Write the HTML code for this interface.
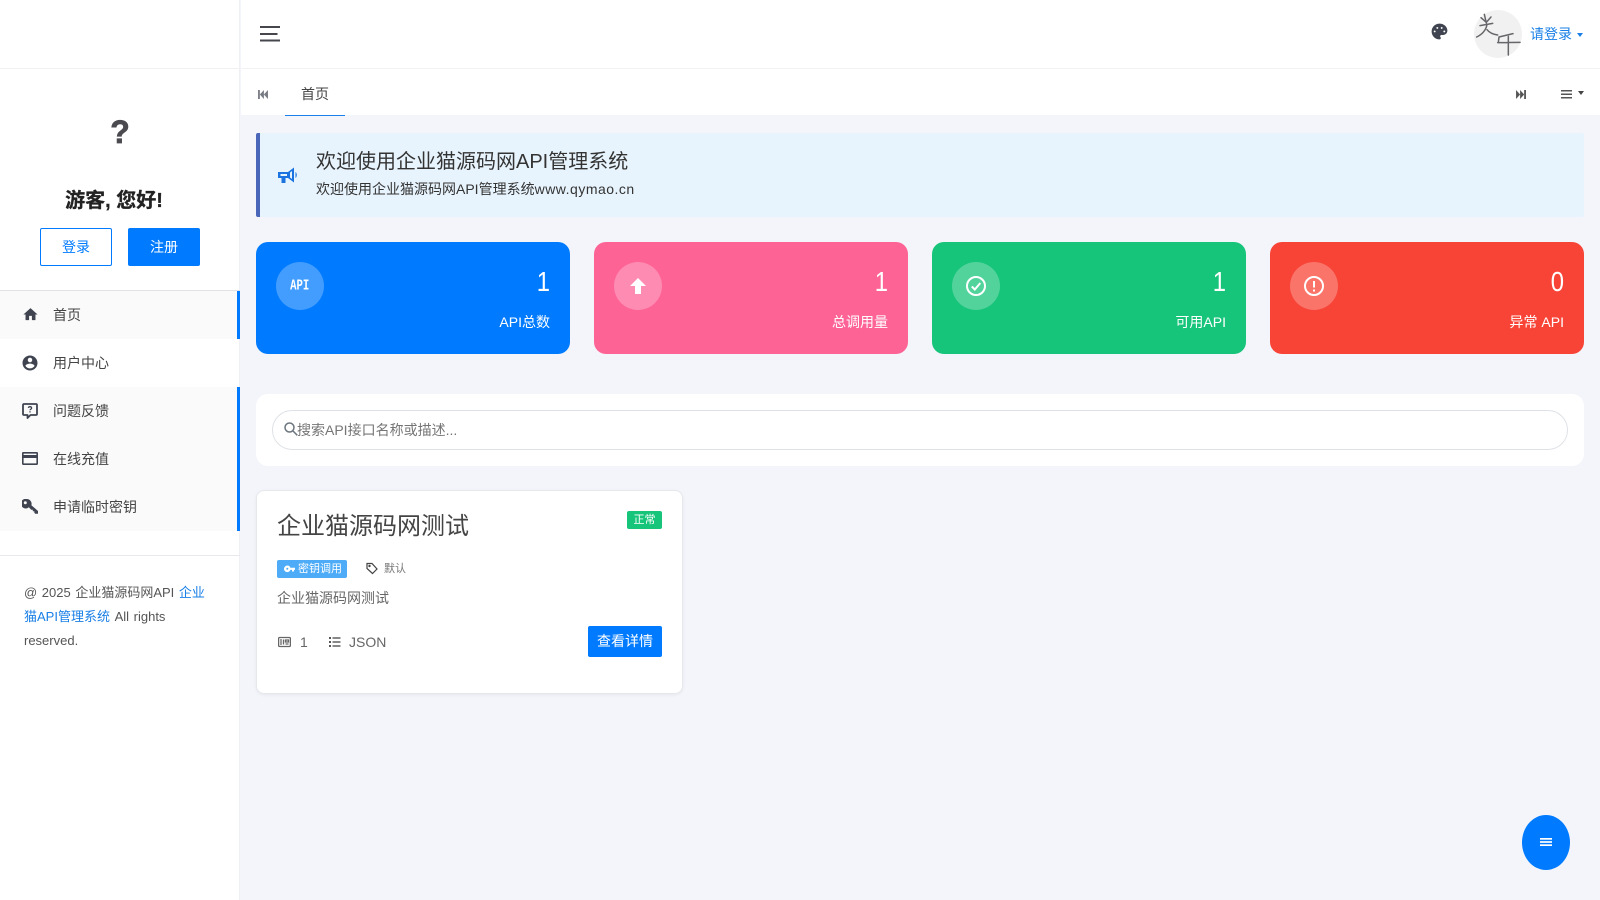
<!DOCTYPE html>
<html lang="zh-CN"><head><meta charset="utf-8"><title>企业猫源码网API</title>
<style>
*{box-sizing:border-box}
html,body{margin:0;padding:0;width:1600px;height:900px;overflow:hidden;background:#f3f5fa;font-family:"Liberation Sans","Noto Sans CJK SC",sans-serif;color:#444;font-size:14px}
.a{position:absolute}
.t{position:absolute;white-space:nowrap;height:20px;line-height:20px}
.r{text-align:right}
.n{height:32px;line-height:32px;font-size:28px;color:#fff;width:100px;top:266px;transform:scaleX(.85);transform-origin:right center}
svg{position:absolute;display:block}
a{color:#1a7fe6;text-decoration:none}
</style></head><body>
<!-- sidebar -->
<div class="a" style="left:0;top:0;width:240px;height:900px;background:#fff;border-right:1px solid #eef0f3"></div>
<div class="a" style="left:0;top:68px;width:240px;height:1px;background:#f0f1f3"></div>
<div class="t" style="left:100px;top:112px;width:40px;height:40px;line-height:40px;text-align:center;font-size:32px;font-weight:700;color:#4a4a4f;-webkit-text-stroke:.7px #4a4a4f">?</div>
<div class="t" style="left:0;top:187px;width:228px;height:28px;line-height:28px;text-align:center;font-size:20px;font-weight:700;color:#222;-webkit-text-stroke:.3px #222">游客, 您好!</div>
<div class="a" style="left:40px;top:228px;width:72px;height:38px;border:1px solid #007bff;border-radius:2px;color:#007bff;text-align:center;line-height:36px">登录</div>
<div class="a" style="left:128px;top:228px;width:72px;height:38px;background:#007bff;border-radius:2px;color:#fff;text-align:center;line-height:38px">注册</div>
<div class="a" style="left:0;top:290px;width:240px;height:1px;background:#dfe1e4"></div>
<div class="a" style="left:0;top:291px;width:240px;height:48px;background:#fafafb;border-right:3px solid #007bff"></div>
<div class="a" style="left:0;top:387px;width:240px;height:144px;background:#fafafb;border-right:3px solid #007bff"></div>
<svg style="left:22px;top:306px" width="17" height="17" viewBox="0 0 24 24" fill="#3f4450"><path d="M10 20v-6h4v6h5v-8h3L12 3 2 12h3v8z"/></svg>
<svg style="left:21px;top:354px" width="18" height="18" viewBox="0 0 24 24" fill="#3f4450"><path d="M12 2C6.48 2 2 6.48 2 12s4.48 10 10 10 10-4.48 10-10S17.52 2 12 2zm0 3c1.66 0 3 1.34 3 3s-1.34 3-3 3-3-1.34-3-3 1.34-3 3-3zm0 14.2c-2.5 0-4.71-1.28-6-3.22.03-1.99 4-3.08 6-3.08 1.99 0 5.97 1.09 6 3.08-1.29 1.94-3.5 3.22-6 3.22z"/></svg>
<svg style="left:22px;top:403px" width="16" height="16" viewBox="0 0 16 16" fill="none" stroke="#3f4450" stroke-width="1.800"><path d="M2 1h12a1 1 0 0 1 1 1v9a1 1 0 0 1-1 1H8.500L5.500 15v-3H2a1 1 0 0 1-1-1V2a1 1 0 0 1 1-1z" stroke-linejoin="round"/><path d="M6.400 4.900c.2-1.700 3.200-1.600 3.200.2 0 1.100-1.600 1.200-1.600 2.200" stroke-width="1.300"/><path d="M8 8.200v1.300" stroke-width="1.300"/></svg>
<svg style="left:22px;top:452px" width="16" height="13" viewBox="0 0 16 13"><path fill="#3f4450" d="M1.200 0h13.600A1.200 1.200 0 0 1 16 1.200v10.600a1.200 1.200 0 0 1-1.200 1.200H1.200A1.200 1.200 0 0 1 0 11.800V1.200A1.200 1.200 0 0 1 1.200 0zm.4 6v5.400h12.800V6zm0-4.400V3h12.800V1.600z" fill-rule="evenodd"/></svg>
<svg style="left:22px;top:499px" width="16" height="15" viewBox="0 0 16 15"><path fill="#3f4450" fill-rule="evenodd" d="M4.800 0a4.800 4.800 0 0 1 4.600 6.200L16 12v2.800h-2.800l-.9-1.200v-1.400h-1.500v-1.500H9.200L6.800 8.200A4.800 4.800 0 1 1 4.800 0zM3.300 2.300a1.500 1.500 0 1 0 0 3 1.500 1.500 0 0 0 0-3z"/></svg>
<div class="t" style="left:53px;top:305px">首页</div>
<div class="t" style="left:53px;top:353px">用户中心</div>
<div class="t" style="left:53px;top:401px">问题反馈</div>
<div class="t" style="left:53px;top:449px">在线充值</div>
<div class="t" style="left:53px;top:497px">申请临时密钥</div>
<div class="a" style="left:0;top:555px;width:240px;height:1px;background:#e8e9ec"></div>
<div class="a" style="left:24px;top:581px;width:200px;font-size:13px;word-spacing:1px;line-height:24px;color:#555;white-space:nowrap">@ 2025 企业猫源码网API <a>企业</a><br><a>猫API管理系统</a> All rights<br>reserved.</div>
<!-- header -->
<div class="a" style="left:241px;top:0;width:1359px;height:115px;background:#fff"></div>
<div class="a" style="left:241px;top:68px;width:1359px;height:1px;background:#f1f2f4"></div>
<svg style="left:260px;top:26px" width="20" height="16" viewBox="0 0 20 16" fill="#45474d"><rect y="0" width="20" height="2"/><rect y="7" width="17.500" height="2"/><rect y="13.500" width="20" height="2"/></svg>
<svg style="left:1428.500px;top:20.500px" width="21" height="21" viewBox="0 0 24 24" fill="#3f4450"><path fill-rule="evenodd" d="M12 3a9 9 0 0 0 0 18c.83 0 1.500-.67 1.500-1.500 0-.39-.15-.74-.39-1.010-.23-.26-.38-.61-.38-.99 0-.83.67-1.500 1.500-1.500H16c2.760 0 5-2.240 5-5 0-4.420-4.030-8-9-8zM6.500 13a1.100 1.100 0 1 1 0-2.200 1.100 1.100 0 0 1 0 2.200zm3-4a1.100 1.100 0 1 1 0-2.200 1.100 1.100 0 0 1 0 2.200zm5 0a1.100 1.100 0 1 1 0-2.200 1.100 1.100 0 0 1 0 2.200zm3 4a1.100 1.100 0 1 1 0-2.200 1.100 1.100 0 0 1 0 2.200z"/></svg>
<div class="a" style="left:1474px;top:10px;width:48px;height:48px;border-radius:50%;background:#f1f1f1"></div>
<svg style="left:1425px;top:5px" width="175" height="60" viewBox="0 0 525 180" fill="none" stroke="#66666a" stroke-width="4.500" stroke-linecap="round"><path d="M178 28L184 54M168 38L184 52 198 36M165 62L203 55M186 58C184 74 172 88 155 96M186 74C194 84 204 88 218 90M222 96L264 86M222 96L220 112M218 113L285 112M250 94L250 150"/></svg>
<div class="t" style="left:1530px;top:24px;color:#1a7fe6">请登录</div>
<div class="a" style="left:1577px;top:33px;border:3.500px solid transparent;border-top:4px solid #1a7fe6;border-bottom:0"></div>
<!-- tabs -->
<svg style="left:258px;top:90px" width="10" height="9" viewBox="0 0 11 10" fill="#777b84"><rect width="2" height="10"/><path d="M6.500 0v10L2 5zM11 0v10L6.500 5z"/></svg>
<div class="t" style="left:301px;top:84px">首页</div>
<div class="a" style="left:285px;top:115px;width:60px;height:1px;background:#1a7fe6"></div>
<svg style="left:1516px;top:90px" width="10" height="9" viewBox="0 0 11 10" fill="#555"><rect x="9" width="2" height="10"/><path d="M0 0v10l4.500-5zM4.500 0v10L9 5z"/></svg>
<svg style="left:1561px;top:90px" width="11" height="9" viewBox="0 0 11 9" fill="#555"><rect width="11" height="1.500"/><rect y="3.500" width="11" height="1.500"/><rect y="7" width="11" height="1.500"/></svg>
<div class="a" style="left:1578px;top:91px;border:3.500px solid transparent;border-top:4px solid #444;border-bottom:0"></div>
<!-- notice -->
<div class="a" style="left:256px;top:133px;width:1328px;height:84px;background:#e8f4fd;border-left:4px solid #4a66b8;border-radius:2px"></div>
<svg style="left:276px;top:165px" width="24" height="20" viewBox="0 0 24 20" fill="#1a73e0"><path fill-rule="evenodd" d="M2 7h10L18 2.500v15L12 13H9.500v5h-4v-5H2zM4.500 9v2H11V9zM14 7.500v5l2 1.500V6z"/><path d="M19.500 7c1.700 1.200 1.700 4.800 0 6z"/></svg>
<div class="t" style="left:316px;top:148px;height:28px;line-height:28px;font-size:20px;color:#333">欢迎使用企业猫源码网API管理系统</div>
<div class="t" style="left:316px;top:179px;color:#333">欢迎使用企业猫源码网API管理系统<span style="letter-spacing:.5px">www.qymao.cn</span></div>
<!-- stats -->
<div class="a" style="left:256px;top:242px;width:314px;height:112px;border-radius:12px;background:#007bff"></div>
<div class="a" style="left:594px;top:242px;width:314px;height:112px;border-radius:12px;background:#fe6396"></div>
<div class="a" style="left:932px;top:242px;width:314px;height:112px;border-radius:12px;background:#16c47a"></div>
<div class="a" style="left:1270px;top:242px;width:314px;height:112px;border-radius:12px;background:#f84437"></div>
<div class="a" style="left:276px;top:262px;width:48px;height:48px;border-radius:50%;background:rgba(255,255,255,.26);color:#fff;font:700 13px/48px 'Liberation Mono',monospace;text-align:center"><span style="display:inline-block;transform:scale(.82,1.1)">API</span></div>
<div class="a" style="left:614px;top:262px;width:48px;height:48px;border-radius:50%;background:rgba(255,255,255,.26)"></div>
<div class="a" style="left:952px;top:262px;width:48px;height:48px;border-radius:50%;background:rgba(255,255,255,.26)"></div>
<div class="a" style="left:1290px;top:262px;width:48px;height:48px;border-radius:50%;background:rgba(255,255,255,.26)"></div>
<svg style="left:626px;top:274px" width="24" height="24" viewBox="0 0 24 24" fill="#fff"><path d="M15 20H9v-8H4l8-8 8 8h-5v8z"/></svg>
<svg style="left:964px;top:274px" width="24" height="24" viewBox="0 0 24 24" fill="none" stroke="#fff" stroke-width="2"><circle cx="12" cy="12" r="9"/><path d="M7.800 12.500l3 3 5.500-6.500"/></svg>
<svg style="left:1302px;top:274px" width="24" height="24" viewBox="0 0 24 24" fill="none" stroke="#fff" stroke-width="2"><circle cx="12" cy="12" r="9"/><path d="M12 7v6.500M12 15.500v2"/></svg>
<div class="t r n" style="left:450px">1</div>
<div class="t r n" style="left:788px">1</div>
<div class="t r n" style="left:1126px">1</div>
<div class="t r n" style="left:1464px">0</div>
<div class="t r" style="left:450px;top:312px;width:100px;color:#fff">API总数</div>
<div class="t r" style="left:788px;top:312px;width:100px;color:#fff">总调用量</div>
<div class="t r" style="left:1126px;top:312px;width:100px;color:#fff">可用API</div>
<div class="t r" style="left:1464px;top:312px;width:100px;color:#fff">异常 API</div>
<!-- search -->
<div class="a" style="left:256px;top:394px;width:1328px;height:72px;background:#fff;border-radius:12px"></div>
<div class="a" style="left:272px;top:410px;width:1296px;height:40px;background:#fff;border:1px solid #dee2e6;border-radius:20px"></div>
<svg style="left:284px;top:422px" width="14" height="14" viewBox="0 0 14 14" fill="none" stroke="#6c757d" stroke-width="1.500"><circle cx="5.500" cy="5.500" r="4.500"/><path d="M9 9l4.300 4.300"/></svg>
<div class="t" style="left:297px;top:420px;color:#757575">搜索API接口名称或描述...</div>
<!-- api card -->
<div class="a" style="left:256px;top:490px;width:427px;height:204px;background:#fff;border:1px solid #e6e8ec;border-radius:8px;box-shadow:0 1px 3px rgba(0,0,0,.06)"></div>
<div class="t" style="left:277px;top:509px;height:36px;line-height:36px;font-size:24px;color:#444">企业猫源码网测试</div>
<div class="a" style="left:627px;top:511px;width:35px;height:18px;background:#16c47a;border-radius:2px;color:#fff;font-size:11px;line-height:18px;text-align:center">正常</div>
<div class="a" style="left:277px;top:560px;width:70px;height:18px;background:#4dabf7;border-radius:2px"></div>
<svg style="left:284px;top:565px" width="11" height="8" viewBox="0 0 11 8" fill="#fff"><path fill-rule="evenodd" d="M3.300 .5a3.300 3.300 0 0 1 3.100 2.200H11v2.200h-1v1.600H8V4.900H6.400A3.300 3.300 0 1 1 3.300 .5zm0 2.300a1 1 0 1 0 0 2 1 1 0 0 0 0-2z"/></svg>
<div class="t" style="left:298px;top:559px;font-size:11px;color:#fff">密钥调用</div>
<svg style="left:366px;top:562px" width="12" height="13" viewBox="0 0 12 13" fill="none" stroke="#444" stroke-width="1.200"><path d="M1 1.500h5l5 5.500-4.500 4.500L1 6.500z"/><circle cx="3.500" cy="4" r=".6"/></svg>
<div class="t" style="left:384px;top:559px;font-size:11px;color:#777">默认</div>
<div class="t" style="left:277px;top:588px;color:#666">企业猫源码网测试</div>
<svg style="left:278px;top:636px" width="13" height="12" viewBox="0 0 13 12" fill="none" stroke="#666" stroke-width="1.300"><rect x=".6" y="1.500" width="11.800" height="9" rx="1"/><path d="M2 4h2M2 6h2M2 8h2M5.500 3.500v5M7.500 4h3v2h-3zM7.500 8h3"/></svg>
<div class="t" style="left:300px;top:632px;color:#666">1</div>
<svg style="left:329px;top:636px" width="12" height="12" viewBox="0 0 12 12" fill="#555"><rect y="1" width="2" height="2"/><rect y="5" width="2" height="2"/><rect y="9" width="2" height="2"/><rect x="3.500" y="1.300" width="8" height="1.400"/><rect x="3.500" y="5.300" width="8" height="1.400"/><rect x="3.500" y="9.300" width="8" height="1.400"/></svg>
<div class="t" style="left:349px;top:632px;color:#666">JSON</div>
<div class="a" style="left:588px;top:626px;width:74px;height:31px;background:#007bff;border-radius:2px;color:#fff;text-align:center;line-height:31px">查看详情</div>
<!-- fab -->
<div class="a" style="left:1522px;top:815px;width:48px;height:55px;border-radius:50%;background:#007bff"></div>
<svg style="left:1540px;top:838px" width="12" height="8" viewBox="0 0 12 8" fill="#fff"><rect width="12" height="1.700"/><rect y="3.150" width="12" height="1.700"/><rect y="6.300" width="12" height="1.700"/></svg>
</body></html>
